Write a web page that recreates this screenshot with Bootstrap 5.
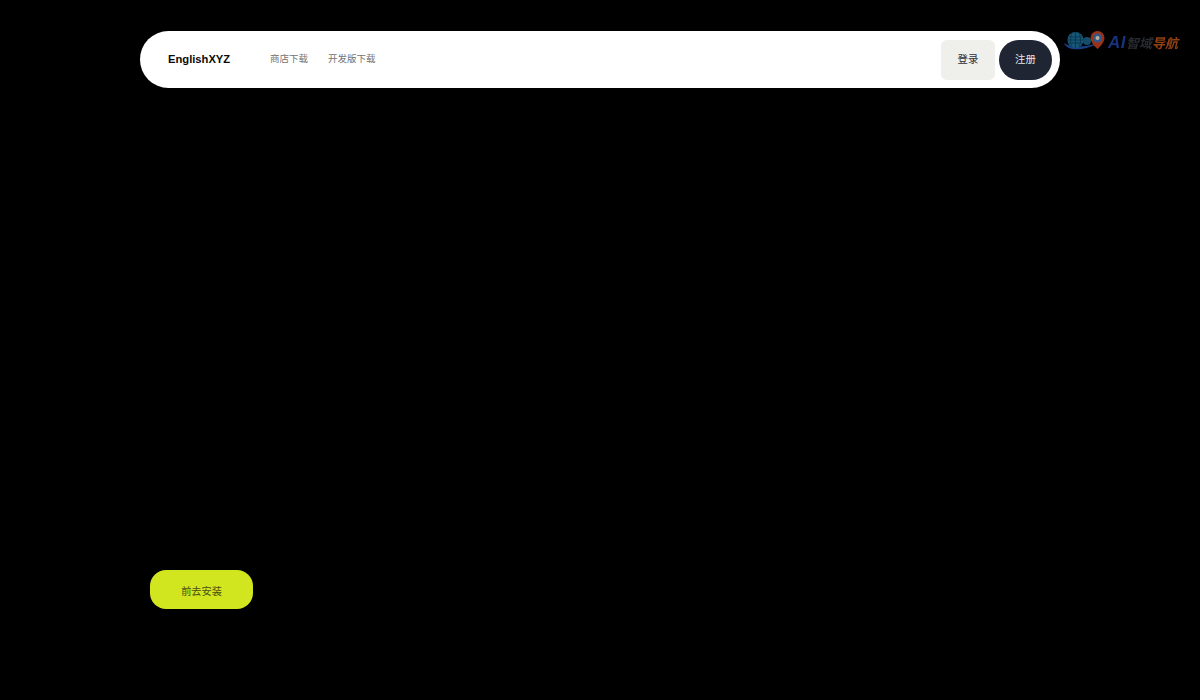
<!DOCTYPE html>
<html lang="zh-CN">
<head>
    <meta charset="UTF-8">
    <meta name="viewport" content="width=device-width, initial-scale=1.0">
    <title>EnglishXYZ</title>
    <link href="https://cdn.jsdelivr.net/npm/bootstrap@5.3.2/dist/css/bootstrap.min.css" rel="stylesheet">
    <style>
        body {
            background: #000;
            height: 700px;
            overflow: hidden;
            font-family: "Liberation Sans", "Noto Sans CJK SC", sans-serif;
        }
        .page-wrap {
            width: 920px;
            padding-top: 31px;
        }
        .top-bar {
            height: 57px;
            border-radius: 28.5px;
            padding: 0 8px 0 28px;
        }
        .brand-name {
            width: 102px;
            font-size: 11.2px;
            font-weight: 700;
            color: #0a0a0a;
        }
        .top-link {
            font-size: 9.5px;
            color: #737373;
            text-decoration: none;
        }
        .links-gap { gap: 20px; }
        .btn-login, .btn-register {
            width: 53px;
            height: 40px;
            padding: 0;
            font-size: 10.4px;
            border: 0;
        }
        .btn-login {
            width: 54px;
            background: #efefeb;
            color: #2a2e38;
            border-radius: 6px;
        }
        .btn-register {
            background: #1f2533;
            color: #e8e8e8;
            border-radius: 20px;
        }
        .btn-gap { gap: 4px; }
        .btn-install {
            display: block;
            width: 103px;
            height: 39px;
            margin: 482px 0 0 10px;
            padding: 4px 0 0;
            background: #d2e61f;
            color: #4a5215;
            font-size: 10.2px;
            border: 0;
            border-radius: 16px;
        }
        .logo-mark {
            position: absolute;
            top: 29px;
            left: 1063px;
            opacity: .8;
            filter: blur(.5px);
        }
        .logo-mark svg { display: block; }
        .logo-text {
            margin-left: 1px;
            padding-top: 4px;
            line-height: 20px;
        }
        .logo-ai {
            font-size: 17px;
            font-weight: 700;
            font-style: italic;
            color: #1f3f9a;
            letter-spacing: .5px;
        }
        .logo-cn {
            font-size: 13px;
            font-weight: 700;
            font-style: italic;
            color: #33363f;
        }
        .logo-cn-hot { color: #b5501a; }
    </style>
</head>
<body>
    <div class="page-wrap mx-auto">
        <nav class="top-bar bg-white d-flex align-items-center">
            <span class="brand-name">EnglishXYZ</span>
            <div class="d-flex links-gap">
                <a class="top-link" href="#">商店下载</a>
                <a class="top-link" href="#">开发版下载</a>
            </div>
            <div class="d-flex btn-gap ms-auto">
                <button class="btn btn-login" type="button">登录</button>
                <button class="btn btn-register" type="button">注册</button>
            </div>
        </nav>
        <button class="btn btn-install" type="button">前去安装</button>
    </div>

    <!-- site watermark, top right -->
    <div class="logo-mark d-flex align-items-center">
        <svg width="44" height="24" viewBox="0 0 44 24">
            <path d="M1 13 C4 22 24 22 42 9 C30 17 9 19 1 13Z" fill="#1d4fa8"/>
            <circle cx="12.5" cy="10" r="8" fill="#1f6f95"/>
            <path d="M6 7h13M5 10h15M6 13h13M12.5 2v16M9 3c-2 4-2 10 0 14M16 3c2 4 2 10 0 14" stroke="#0e3f63" stroke-width=".9" fill="none"/>
            <circle cx="24" cy="11" r="4" fill="#1c5f88"/>
            <path d="M34.5 1a7 7 0 0 1 7 7c0 5-7 11-7 11s-7-6-7-11a7 7 0 0 1 7-7z" fill="#c2401f"/>
            <circle cx="34.5" cy="8" r="4.5" fill="#3d6fb0"/>
            <circle cx="34.5" cy="8" r="2" fill="#e8dcc0"/>
        </svg>
        <div class="logo-text"><span class="logo-ai">AI</span><span class="logo-cn">智域<span class="logo-cn-hot">导航</span></span></div>
    </div>
</body>
</html>
